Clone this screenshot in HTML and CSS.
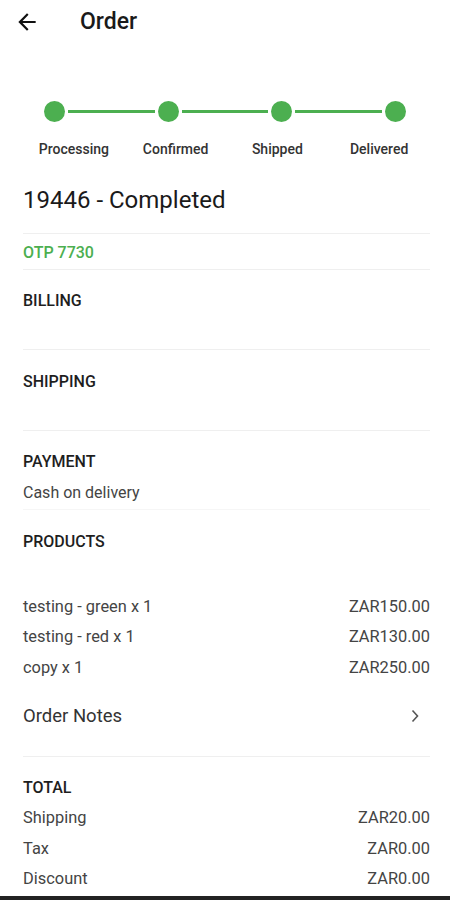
FILE: index.html
```html
<!DOCTYPE html>
<html>
<head>
<meta charset="utf-8">
<link rel="stylesheet" href="styles.css">
</head>
<body>
<div class="page">
  <header class="appbar">
    <svg class="back" viewBox="0 0 24 24" width="26" height="26"><path d="M20 11H7.83l5.59-5.59L12 4l-8 8 8 8 1.41-1.41L7.83 13H20v-2z" fill="#111"/></svg>
    <h1 class="title">Order</h1>
  </header>

  <main class="content">
    <div class="stepper">
      <div class="track">
        <span class="dot"></span><span class="line"></span>
        <span class="dot"></span><span class="line"></span>
        <span class="dot"></span><span class="line"></span>
        <span class="dot"></span>
      </div>
      <div class="labels">
        <span>Processing</span><span>Confirmed</span><span>Shipped</span><span>Delivered</span>
      </div>
    </div>

    <div class="order-no">19446 - Completed</div>
    <div class="otp">OTP 7730</div>

    <section class="block block-billing">
      <h2 class="head">BILLING</h2>
    </section>
    <section class="block block-shipping">
      <h2 class="head">SHIPPING</h2>
    </section>
    <section class="block block-payment">
      <h2 class="head">PAYMENT</h2>
      <p class="text">Cash on delivery</p>
    </section>
    <section class="block block-products">
      <h2 class="head">PRODUCTS</h2>
      <div class="items">
        <div class="row"><span>testing - green x 1</span><span>ZAR150.00</span></div>
        <div class="row"><span>testing - red x 1</span><span>ZAR130.00</span></div>
        <div class="row"><span>copy x 1</span><span>ZAR250.00</span></div>
      </div>
      <div class="notes">
        <span>Order Notes</span>
        <svg class="chev" viewBox="0 0 8 14" width="8" height="14"><path d="M1.5 1.5L6.5 7L1.5 12.5" fill="none" stroke="#555" stroke-width="1.6"/></svg>
      </div>
    </section>
    <section class="block block-total">
      <h2 class="head">TOTAL</h2>
      <div class="row"><span>Shipping</span><span>ZAR20.00</span></div>
      <div class="row"><span>Tax</span><span>ZAR0.00</span></div>
      <div class="row"><span>Discount</span><span>ZAR0.00</span></div>
    </section>
  </main>
  <div class="bottom-edge"></div>
</div>
</body>
</html>
```

FILE: styles.css
```css
* { box-sizing: border-box; }
html, body { margin: 0; padding: 0; background: #fff; }
body {
  font-family: Roboto, "Noto Sans", "Liberation Sans", sans-serif;
  color: #212121;
  width: 450px;
}
.page { display: flex; flex-direction: column; min-height: 900px; }

.appbar {
  height: 43px;
  display: flex;
  align-items: center;
  padding-left: 14px;
}
.back { display: block; }
.title {
  margin: 0 0 0 40px;
  font-size: 23px;
  font-weight: 500;
  line-height: 43px;
  color: #1a1a1a;
}

.content {
  flex: 1;
  padding: 0 20px 0 23px;
}

.stepper { padding-top: 58px; }
.track {
  display: flex;
  align-items: center;
  margin: 0 24px 0 21px;
  height: 21px;
}
.dot {
  width: 21px; height: 21px;
  border-radius: 50%;
  background: #4caf50;
  flex: none;
}
.line {
  flex: 1;
  height: 3px;
  background: #4caf50;
  margin: 0 3px;
}
.labels {
  display: grid;
  grid-template-columns: repeat(4, 1fr);
  margin-top: 17px;
  text-align: center;
  font-size: 14px;
  font-weight: 500;
  line-height: 20px;
  color: #333;
}

.order-no {
  padding: 26px 0 18px;
  font-size: 24px;
  line-height: 30px;
  font-weight: 400;
  color: #1a1a1a;
  border-bottom: 1px solid #efefef;
}
.otp {
  padding: 9px 0 6px;
  font-size: 16px;
  font-weight: 500;
  line-height: 20px;
  color: #4caf50;
  border-bottom: 1px solid #efefef;
}

.block { border-bottom: 1px solid #efefef; }
.head {
  margin: 0;
  font-size: 16px;
  font-weight: 500;
  line-height: 20px;
  color: #1e1e1e;
}
.block-billing { padding: 21px 0 38px; }
.block-shipping { padding: 22px 0 38px; }
.block-payment { padding: 21px 0 6px; border-bottom-color: #f6f6f6; }
.text {
  margin: 11px 0 0;
  font-size: 16px;
  line-height: 20px;
  color: #444;
}
.block-products { padding: 22px 0 28px; }
.items { margin-top: 39px; }
.row {
  display: flex;
  justify-content: space-between;
  align-items: center;
  height: 30.5px;
  font-size: 16.4px;
  color: #444;
}
.notes {
  margin-top: 21px;
  display: flex;
  justify-content: space-between;
  align-items: center;
  height: 24px;
  font-size: 18.5px;
  color: #333;
  padding-right: 11px;
}
.chev { display: block; }
.block-total { padding: 21px 0 0; border-bottom: none; }
.block-total .head { margin-bottom: 5px; }

.bottom-edge {
  height: 4px;
  background: #222;
}
```
